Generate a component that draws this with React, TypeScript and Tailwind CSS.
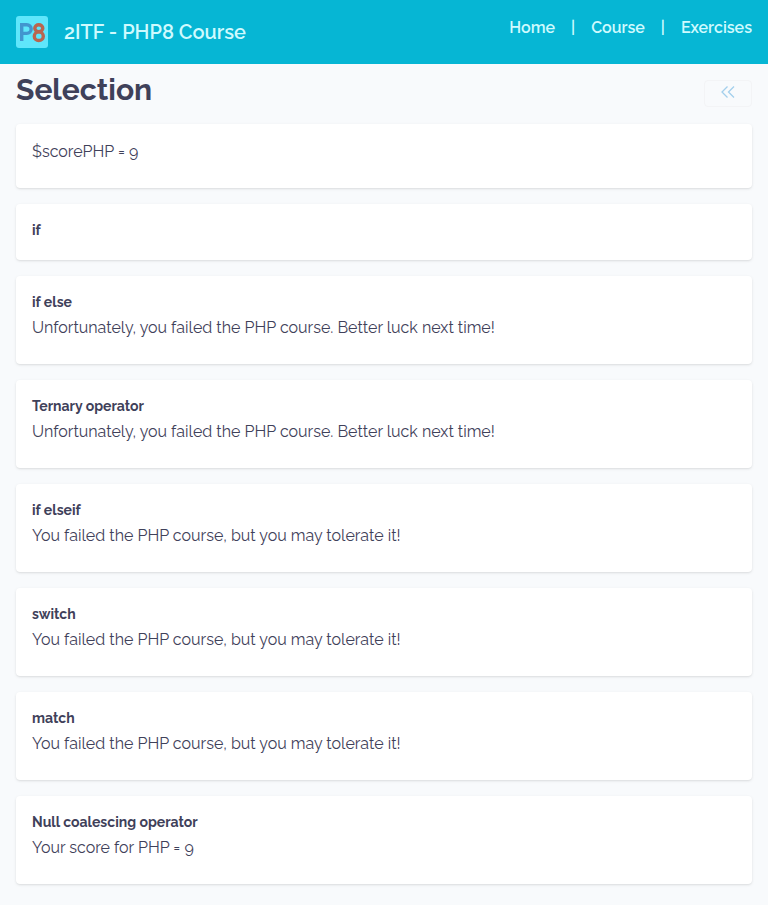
import React from 'react';

type Example = {
  title?: string;
  output?: string;
};

const navLinks = [
  { label: 'Home', href: '#home' },
  { label: 'Course', href: '#course' },
  { label: 'Exercises', href: '#exercises' },
];

const examples: Example[] = [
  { output: '$scorePHP = 9' },
  { title: 'if' },
  { title: 'if else', output: 'Unfortunately, you failed the PHP course. Better luck next time!' },
  { title: 'Ternary operator', output: 'Unfortunately, you failed the PHP course. Better luck next time!' },
  { title: 'if elseif', output: 'You failed the PHP course, but you may tolerate it!' },
  { title: 'switch', output: 'You failed the PHP course, but you may tolerate it!' },
  { title: 'match', output: 'You failed the PHP course, but you may tolerate it!' },
  { title: 'Null coalescing operator', output: 'Your score for PHP = 9' },
];

function Logo() {
  return (
    <svg viewBox="0 0 32 32" className="size-8" role="img" aria-label="P8">
      <rect width="32" height="32" rx="3" fill="#5fe6fb" />
      <g fill="none" strokeWidth="3.4">
        <path d="M5.7 25V8.7h5.1a4.2 4.2 0 0 1 0 8.7H5.7" stroke="#4295cf" />
        <ellipse cx="22.8" cy="12.2" rx="4" ry="3.5" stroke="#b9654f" />
        <ellipse cx="22.8" cy="20.2" rx="4.5" ry="4.3" stroke="#b9654f" />
      </g>
    </svg>
  );
}

function Header() {
  return (
    <header className="flex h-16 items-center justify-between bg-[#06b6d4] px-4 text-[#cffafe]">
      <div className="flex items-center gap-4">
        <Logo />
        <span className="text-xl font-semibold">2ITF - PHP8 Course</span>
      </div>
      <nav className="mb-2 flex items-center gap-4 font-semibold">
        {navLinks.map((link, index) => (
          <React.Fragment key={link.label}>
            {index > 0 && <span aria-hidden="true">|</span>}
            <a href={link.href}>{link.label}</a>
          </React.Fragment>
        ))}
      </nav>
    </header>
  );
}

function ExampleCard({ title, output }: Example) {
  return (
    <section className="rounded-sm bg-white p-4 shadow">
      {title && <h2 className="mb-1 text-sm font-bold">{title}</h2>}
      {output && <p className="mb-2 font-normal">{output}</p>}
    </section>
  );
}

export default function App() {
  return (
    <div className="min-h-screen bg-[#f8fafc] font-['Raleway','Lato',sans-serif] text-[#3f415a]">
      <Header />
      <main className="px-4 pt-2 pb-5">
        <div className="mb-4 flex items-start justify-between">
          <h1 className="text-3xl font-bold">Selection</h1>
          <button
            type="button"
            aria-label="Previous"
            className="mt-2 flex h-[27px] w-12 items-start justify-center rounded border border-[#f3f4f6] pt-[5px] text-[#a3cfec]"
          >
            <svg viewBox="0 0 14 12" className="h-3 w-3.5" fill="none" stroke="currentColor" strokeWidth="1.3" aria-hidden="true">
              <path d="M6.5.5 1 6l5.500 5.500M13 .5 7.500 6l5.500 5.500" />
            </svg>
          </button>
        </div>
        <div className="flex flex-col gap-4">
          {examples.map((example, index) => (
            <ExampleCard key={index} {...example} />
          ))}
        </div>
      </main>
    </div>
  );
}
